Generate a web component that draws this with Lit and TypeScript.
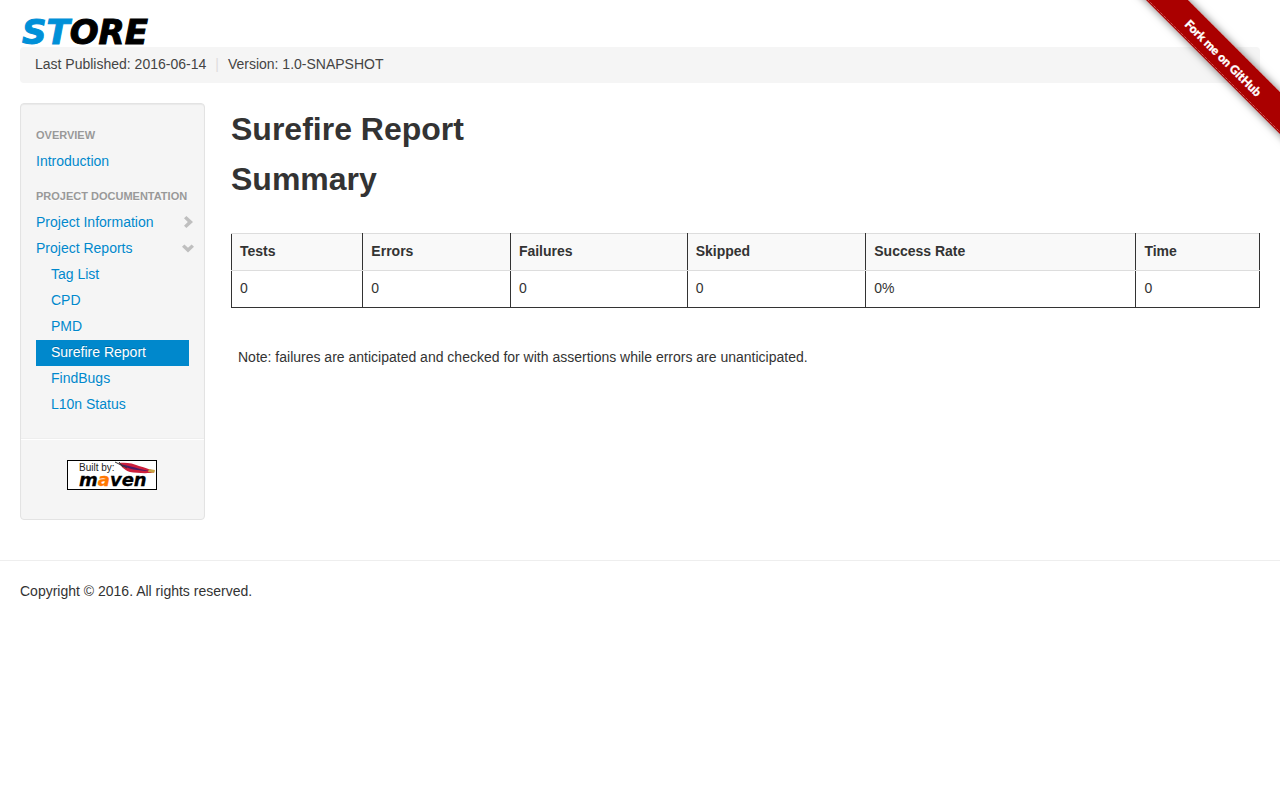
import { LitElement, html, css, svg } from "lit";
import { customElement } from "lit/decorators.js";

const chevronRight = svg`<path d="M2 2.2 L4.4 0 L11 6 L4.4 12 L2 9.8 L5.8 6 Z" />`;
const chevronDown = svg`<path d="M0 4.8 L2.4 2.4 L6 5.8 L9.6 2.4 L12 4.8 L6 10.6 Z" />`;

const reports = ["Tag List", "CPD", "PMD", "Surefire Report", "FindBugs", "L10n Status"];
const columns = ["Tests", "Errors", "Failures", "Skipped", "Success Rate", "Time"];
const totals = ["0", "0", "0", "0", "0%", "0"];

@customElement("app-root")
export class AppRoot extends LitElement {
  static styles = css`
    :host {
      display: block;
      font: 14px/20px "Helvetica Neue", Helvetica, "Liberation Sans", Arial, sans-serif;
      color: #333;
      background: #fff;
    }
    a {
      color: #0088cc;
      text-decoration: none;
    }
    .page {
      padding: 20px 20px 0;
    }
    .logo {
      display: block;
      width: 136px;
      height: 27px;
      overflow: visible;
    }
    .ribbon {
      position: absolute;
      top: 0;
      right: 0;
      width: 149px;
      height: 149px;
      overflow: hidden;
    }
    .breadcrumb {
      display: flex;
      gap: 9px;
      margin: 0 0 20px;
      padding: 7px 15px 9px;
      list-style: none;
      color: #444;
      background: #f5f5f5;
      border-radius: 4px;
      line-height: 20px;
    }
    .divider {
      color: #ddd;
    }
    .columns {
      display: grid;
      grid-template-columns: 185fr 1029fr;
      gap: 26px;
      align-items: start;
    }
    .sidebar {
      padding: 19px 0 29px;
      background: #f5f5f5;
      border: 1px solid #e3e3e3;
      border-radius: 4px;
      box-shadow: inset 0 1px 1px rgba(0, 0, 0, 0.05);
    }
    .group {
      margin: 0;
      padding: 2px 15px 4px;
      font-size: 11px;
      line-height: 20px;
      font-weight: bold;
      color: #999;
      text-transform: uppercase;
      text-shadow: 0 1px 0 rgba(255, 255, 255, 0.5);
      white-space: nowrap;
    }
    .list {
      margin: 0;
      padding: 0 15px;
      list-style: none;
    }
    .list + .group {
      margin-top: 9px;
    }
    .list .list {
      padding: 0;
    }
    .item {
      display: flex;
      justify-content: space-between;
      align-items: center;
      padding: 2px 0 4px;
      text-shadow: 0 1px 0 rgba(255, 255, 255, 0.5);
    }
    .branch {
      margin-right: -6px;
    }
    .child {
      padding-left: 15px;
    }
    .active {
      color: #fff;
      background: #0088cc;
      text-shadow: 0 -1px 0 rgba(0, 0, 0, 0.2);
    }
    .chevron {
      width: 13px;
      height: 12px;
      fill: #bfbfbf;
    }
    .rule {
      margin: 20px 0;
      border: 0;
      border-top: 1px solid #eee;
      border-bottom: 1px solid #fff;
    }
    .badge {
      display: block;
      width: 91px;
      height: 30px;
      margin: 0 auto;
    }
    .badge svg {
      display: block;
    }
    .content {
      padding-top: 6px;
      min-width: 0;
    }
    h2 {
      margin: 0 0 10px;
      font-size: 32px;
      line-height: 40px;
      font-weight: bold;
    }
    table {
      width: 100%;
      margin: 34px 0 39px;
      border-collapse: collapse;
    }
    th,
    td {
      padding: 7px 8px 9px;
      text-align: left;
      border: 1px solid #333;
      border-top-color: #ddd;
    }
    th {
      background: #f9f9f9;
      border-bottom-color: #ddd;
    }
    .note {
      margin: 0;
      padding-left: 7px;
    }
    footer {
      margin-top: 40px;
      padding: 20px;
      border-top: 1px solid #eee;
    }
    footer p {
      margin: 0;
    }
  `;

  render() {
    return html`
      <div class="page">
        <header>
          <svg class="logo" viewBox="0 0 136 27" role="img" aria-label="Store">
            <text x="2" y="24" font-family="DejaVu Sans" font-size="34" font-weight="bold" font-style="italic" stroke-width="1"><tspan fill="#0090d8" stroke="#0090d8">ST</tspan><tspan fill="#000" stroke="#000">ORE</tspan></text>
          </svg>
          <ul class="breadcrumb">
            <li>Last Published: 2016-06-14</li>
            <li class="divider">|</li>
            <li>Version: 1.0-SNAPSHOT</li>
          </ul>
        </header>
        <div class="columns">
          <nav class="sidebar">
            <h3 class="group">Overview</h3>
            <ul class="list">
              <li><a class="item" href="#">Introduction</a></li>
            </ul>
            <h3 class="group">Project Documentation</h3>
            <ul class="list">
              <li>
                <a class="item branch" href="#">Project Information<svg class="chevron" viewBox="0 0 13 12">${chevronRight}</svg></a>
              </li>
              <li>
                <a class="item branch" href="#">Project Reports<svg class="chevron" viewBox="0 0 13 12">${chevronDown}</svg></a>
                <ul class="list">
                  ${reports.map(
                    (name) => html`<li>
                      <a class="item child ${name === "Surefire Report" ? "active" : ""}" href="#">${name}</a>
                    </li>`
                  )}
                </ul>
              </li>
            </ul>
            <hr class="rule" />
            <a class="badge" href="#" aria-label="Built by Maven">
              <svg width="90" height="30" viewBox="0 0 90 30">
                <rect x="0.5" y="0.5" width="89" height="29" fill="#fff" stroke="#000" />
                <text x="12" y="11" font-family="Liberation Sans" font-size="10" fill="#222">Built by:</text>
                <text x="12" y="26" font-family="DejaVu Sans" font-size="18" font-weight="bold" font-style="italic" stroke-width="0.3"><tspan fill="#000" stroke="#000">m</tspan><tspan fill="#f70" stroke="#f70">a</tspan><tspan fill="#000" stroke="#000">ven</tspan></text>
                <path d="M52 3 C58 2 66 3 72 6 C78 8 84 9 88 12 C82 14 70 13 63 12 C57 10 54 6 52 3Z" fill="#cc1f3c" />
                <path d="M52 4 C60 5 66 7 73 9 L82 11 C72 11 61 9 52 4Z" fill="#4b1a66" />
                <path d="M82 9 L88 10 L87 13 L81 12Z" fill="#c9a544" />
                <path d="M48 2 L60 8 M52 2 L56 7" stroke="#333" stroke-width="1" fill="none" />
              </svg>
            </a>
          </nav>
          <main class="content">
            <h2>Surefire Report</h2>
            <h2>Summary</h2>
            <table>
              <thead>
                <tr>${columns.map((c) => html`<th scope="col">${c}</th>`)}</tr>
              </thead>
              <tbody>
                <tr>${totals.map((t) => html`<td>${t}</td>`)}</tr>
              </tbody>
            </table>
            <p class="note">Note: failures are anticipated and checked for with assertions while errors are unanticipated.</p>
          </main>
        </div>
      </div>
      <footer><p>Copyright © 2016. All rights reserved.</p></footer>
      <a class="ribbon" href="#" aria-label="Fork me on GitHub">
        <svg width="149" height="149" viewBox="0 0 149 149">
          <defs>
            <filter id="shade" x="-20%" y="-20%" width="140%" height="140%">
              <feDropShadow dx="0" dy="0" stdDeviation="4" flood-color="#000" flood-opacity="0.55" />
            </filter>
          </defs>
          <path d="M-5 -20 H37 L169 112 V154Z" fill="#a00" filter="url(#shade)" />
          <path d="M16 -1 L150 133 M56 -1 L150 93" stroke="#d47f7f" stroke-width="1" stroke-dasharray="1 1" fill="none" />
          <text transform="translate(53 25) rotate(45)" font-family="Lato" font-size="12" font-weight="900" fill="#fff" stroke="#fff" stroke-width="0.3">Fork me on GitHub</text>
        </svg>
      </a>
    `;
  }
}
